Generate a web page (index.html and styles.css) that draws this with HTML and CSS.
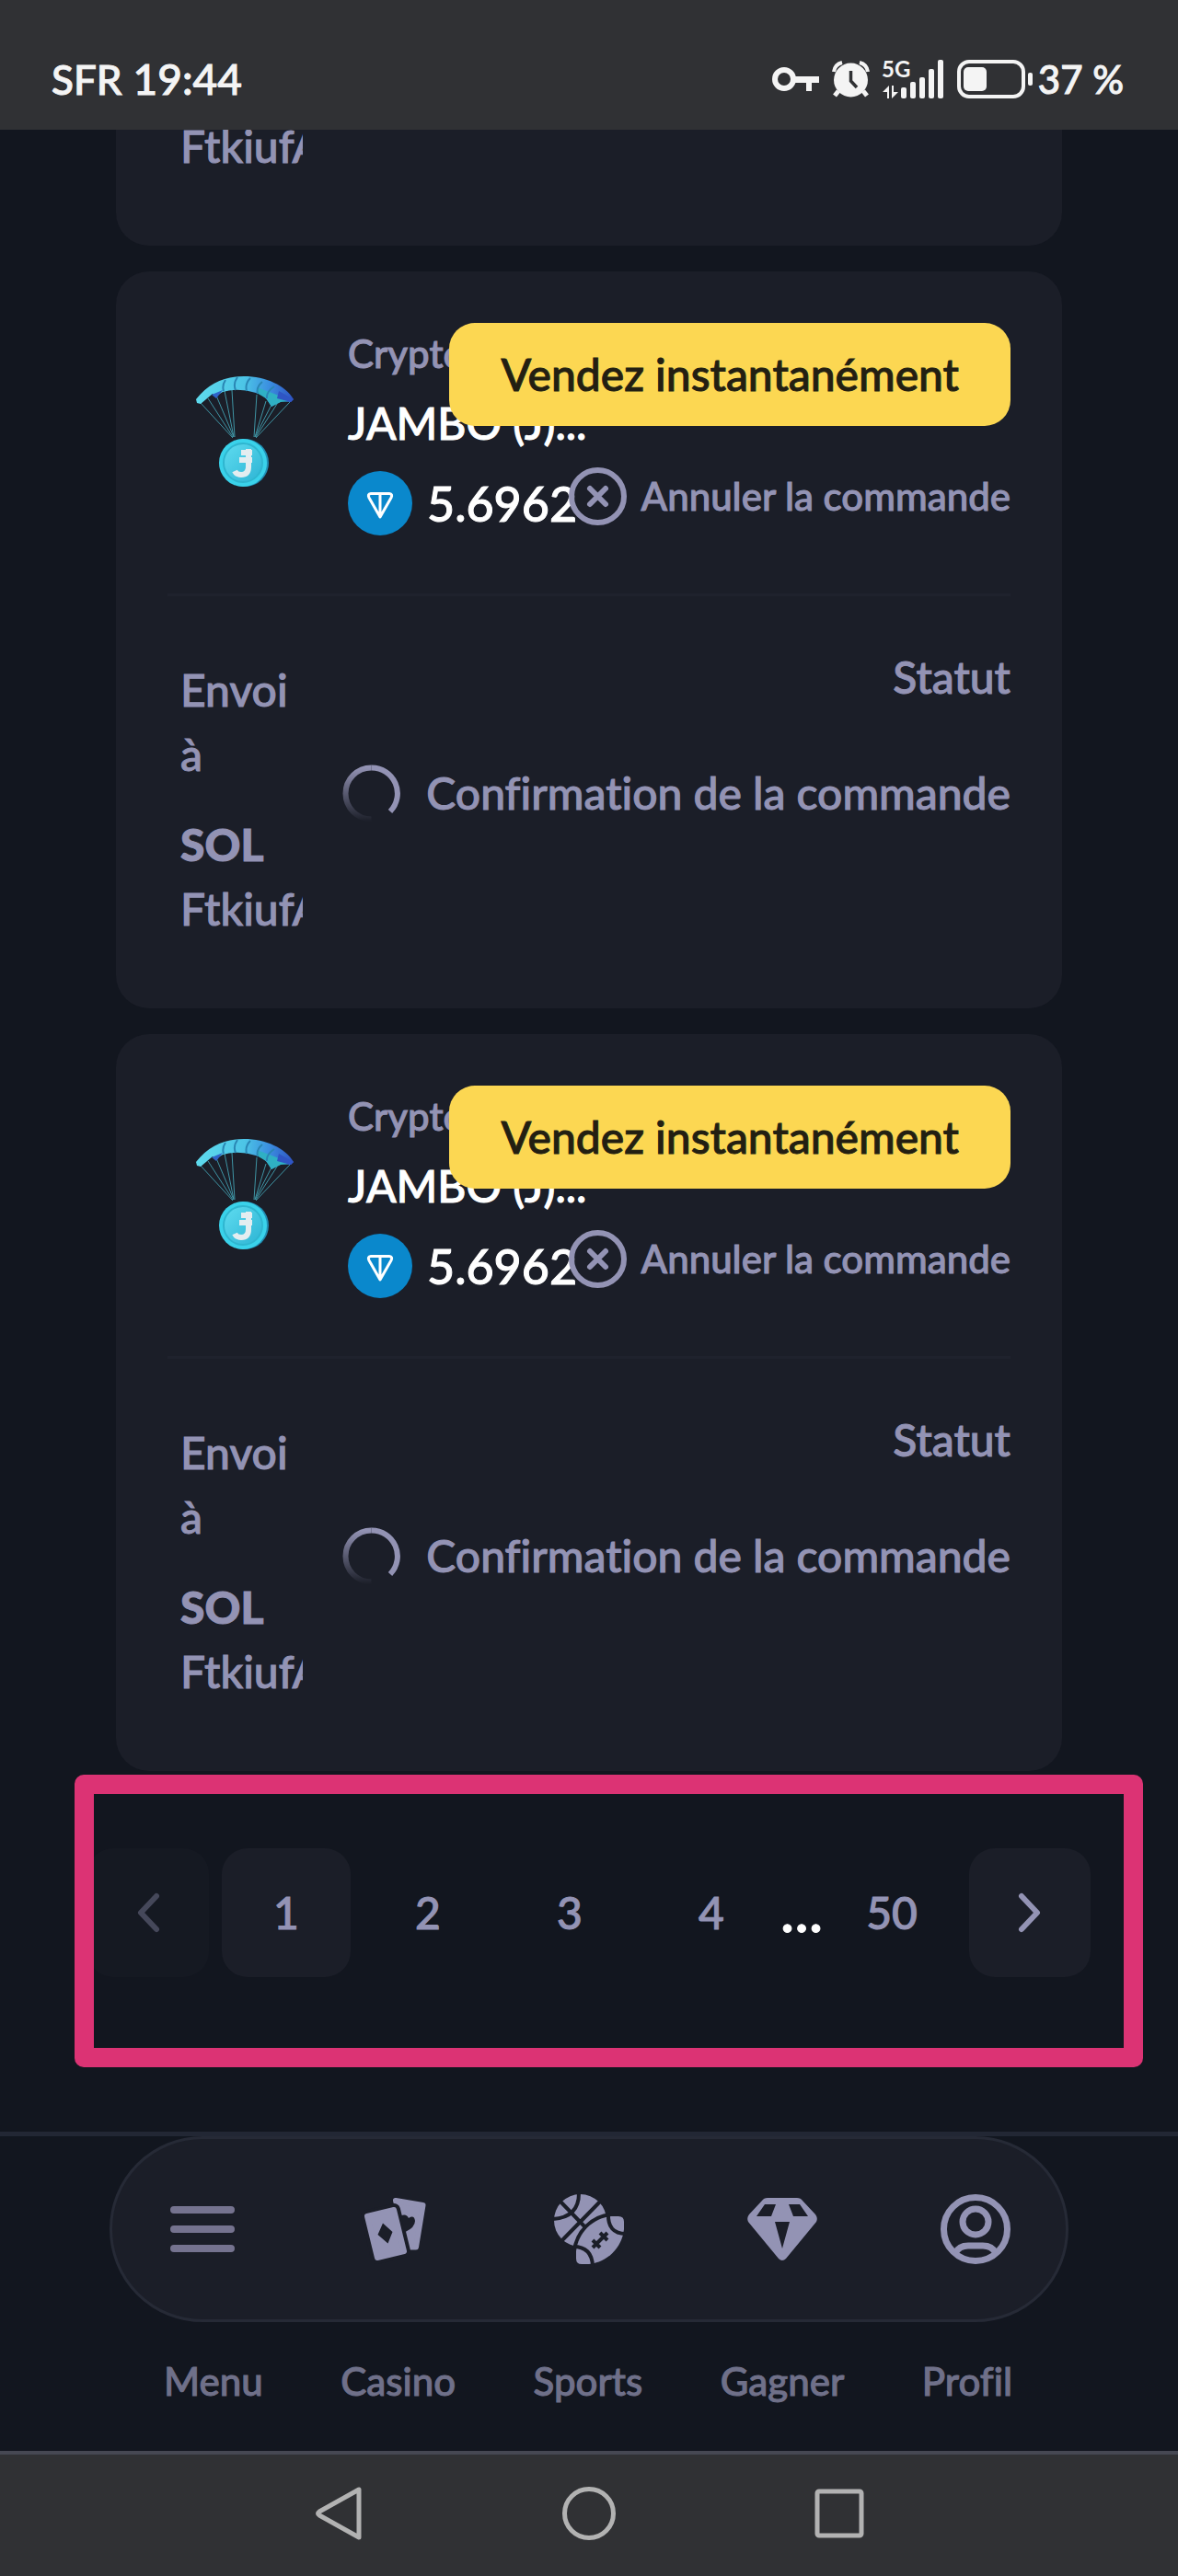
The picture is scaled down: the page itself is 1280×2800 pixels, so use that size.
FILE: index.html
```html
<!DOCTYPE html>
<html lang="fr">
<head>
<meta charset="utf-8">
<meta name="viewport" content="width=device-width, initial-scale=1">
<title>Commandes</title>
<link rel="stylesheet" href="styles.css">
</head>
<body>
<svg class="defs" aria-hidden="true">
  <defs>
    <linearGradient id="fade" gradientUnits="userSpaceOnUse" x1="0" y1="3" x2="0" y2="62">
      <stop offset="0" stop-color="#9393b4"/><stop offset="1" stop-color="#9393b4" stop-opacity="0"/>
    </linearGradient>
    <linearGradient id="canopy" gradientUnits="userSpaceOnUse" x1="0" y1="0" x2="106" y2="10">
      <stop offset="0" stop-color="#5fdcee"/><stop offset=".5" stop-color="#4cc4e6"/><stop offset=".75" stop-color="#3b8fe0"/><stop offset="1" stop-color="#2f55c4"/>
    </linearGradient>
    <linearGradient id="coin" x1="0" y1="0" x2="1" y2="1">
      <stop offset="0" stop-color="#5fdcf0"/><stop offset="1" stop-color="#2db4d4"/>
    </linearGradient>
    <symbol id="airdrop" viewBox="0 0 106 121">
      <g stroke="#3f94a4" stroke-width="1" fill="none">
        <path d="M5 29 40 67M13 24 40 66M22 21 41 66M31 16 41 66M39 15 42 66M66 20 63 66M76 27 64 66M82 31 64 66M88 30 65 66M102 28 65 67"/>
      </g>
      <path d="M0 25C14 7 32 0 52 0C76 0 97 10 106 25L103 28 93 27 82 33C78 25 73 20 65 18Q46 12 29 17L21 22 18 19 5 30 1 29Z" fill="url(#canopy)"/>
      <path d="M66 12 77 16 90 21 103 27 92 28 82 33 76 24 66 18Z" fill="#2fb0c4"/>
      <path d="M90 16 106 25 103 28 88 24Z" fill="#2f55c4"/>
      <path d="M17 20 29 15 22 24Z" fill="#2f63c8"/>
      <path d="M32 4Q28 10 30 16M45 1Q40 8 43 15M59 2Q53 8 55 16M72 6Q65 12 67 19M85 11Q76 17 77 24" fill="none" stroke="#2a86b4" stroke-width="2"/>
      <circle cx="53" cy="94" r="26" fill="#218eb4"/>
      <circle cx="51" cy="94" r="26" fill="#3ad2ea"/>
      <circle cx="51" cy="94" r="21" fill="url(#coin)" stroke="#2fb6d0" stroke-width="2"/>
      <path d="M49 83H61M47 91H61M57 79V98Q57 107 49 107Q44 107 42 103" fill="none" stroke="#e4edf0" stroke-width="6"/>
    </symbol>
    <symbol id="ton" viewBox="0 0 70 70">
      <circle cx="35" cy="35" r="35" fill="#0a88cc"/>
      <path d="M25 24.500H45Q49 25 47 29L35 50 23 29Q21 25 25 24.500ZM35 25V49" fill="none" stroke="#fff" stroke-width="3" stroke-linejoin="round"/>
    </symbol>
    <symbol id="cancel" viewBox="0 0 63 63">
      <g fill="none" stroke="#9393b4" stroke-width="6" stroke-linecap="round">
        <circle cx="31.500" cy="31.500" r="28.500"/><path d="M23 23 40 40M40 23 23 40"/>
      </g>
    </symbol>
    <symbol id="spinner" viewBox="0 0 63 63">
      <path d="M31.500 59.500A28 28 0 0 1 31.500 3.500" fill="none" stroke="url(#fade)" stroke-width="6"/>
      <path d="M31.500 3.500A28 28 0 0 1 52 51" fill="none" stroke="#9393b4" stroke-width="6"/>
    </symbol>
  </defs>
</svg>

<header class="status">
  <span>SFR</span>
  <time class="clock">19:44</time>
  <div class="status-icons">
    <svg class="ic-key" viewBox="0 0 51 26" aria-hidden="true"><circle cx="13" cy="13" r="10" fill="none" stroke="#f4f4f4" stroke-width="6"/><path d="M25 10H51V17H43V26H37V17H25Z" fill="#f4f4f4"/></svg>
    <svg class="ic-alarm" viewBox="0 0 41 40" aria-hidden="true"><circle cx="20.500" cy="21" r="18.500" fill="#f4f4f4"/><path d="M7 33 3 38M34 33 38 38" stroke="#f4f4f4" stroke-width="5"/><path d="M2 12Q3 4 11 2M39 12Q38 4 30 2" fill="none" stroke="#f4f4f4" stroke-width="4"/><path d="M20.500 11V22L27 29" fill="none" stroke="#303134" stroke-width="3.500"/></svg>
    <svg class="ic-signal" viewBox="0 0 67 42" aria-hidden="true"><text x="-1" y="19" class="net">5G</text><g fill="#f4f4f4"><rect x="20" y="30" width="6" height="12" rx="2"/><rect x="30" y="24" width="6" height="18" rx="2"/><rect x="40" y="19" width="6" height="23" rx="2"/><rect x="50" y="10" width="6" height="32" rx="2"/><rect x="60" y="0" width="6" height="42" rx="2"/><path d="M0 35 7 28V42H5V35ZM17 35 10 42V28H12V35Z"/></g></svg>
    <svg class="ic-battery" viewBox="0 0 82 42" aria-hidden="true"><rect x="2" y="2" width="70" height="38" rx="11" fill="none" stroke="#f4f4f4" stroke-width="4"/><rect x="7" y="8" width="25" height="26" rx="5" fill="#f4f4f4"/><rect x="77" y="14" width="5" height="14" rx="2" fill="#f4f4f4"/></svg>
    <span class="level">37 %</span>
  </div>
</header>

<main class="orders">
  <article class="card card-cut">
    <div class="dest"><p class="addr">FtkiufA</p></div>
  </article>

  <article class="card">
    <div class="card-head">
      <div class="art"><svg viewBox="0 0 106 121" role="img" aria-label="JAMBO"><use href="#airdrop"/></svg></div>
      <div class="info">
        <p class="kind">Crypto</p>
        <h2 class="name">JAMBO (J)...</h2>
        <p class="amount"><svg class="ton" aria-hidden="true"><use href="#ton"/></svg>5.6962</p>
      </div>
      <div class="actions">
        <button class="sell" type="button">Vendez instantanément</button>
        <button class="cancel" type="button"><svg class="ring" aria-hidden="true"><use href="#cancel"/></svg>Annuler la commande</button>
      </div>
    </div>
    <div class="card-body">
      <div class="dest"><p>Envoi à</p><p class="coin">SOL</p><p class="addr">FtkiufA</p></div>
      <div class="state"><p>Statut</p><p class="progress"><svg class="ring" aria-hidden="true"><use href="#spinner"/></svg>Confirmation de la commande</p></div>
    </div>
  </article>

  <article class="card">
    <div class="card-head">
      <div class="art"><svg viewBox="0 0 106 121" role="img" aria-label="JAMBO"><use href="#airdrop"/></svg></div>
      <div class="info">
        <p class="kind">Crypto</p>
        <h2 class="name">JAMBO (J)...</h2>
        <p class="amount"><svg class="ton" aria-hidden="true"><use href="#ton"/></svg>5.6962</p>
      </div>
      <div class="actions">
        <button class="sell" type="button">Vendez instantanément</button>
        <button class="cancel" type="button"><svg class="ring" aria-hidden="true"><use href="#cancel"/></svg>Annuler la commande</button>
      </div>
    </div>
    <div class="card-body">
      <div class="dest"><p>Envoi à</p><p class="coin">SOL</p><p class="addr">FtkiufA</p></div>
      <div class="state"><p>Statut</p><p class="progress"><svg class="ring" aria-hidden="true"><use href="#spinner"/></svg>Confirmation de la commande</p></div>
    </div>
  </article>
</main>

<nav class="pager" aria-label="Pagination">
  <button class="arrow" type="button" disabled aria-label="Précédent"><svg viewBox="0 0 24 42"><path d="M21 3 4 21 21 39"/></svg></button>
  <button class="page current" type="button" aria-current="page">1</button>
  <button class="page" type="button">2</button>
  <button class="page" type="button">3</button>
  <button class="page" type="button">4</button>
  <span class="dots">...</span>
  <button class="page" type="button">50</button>
  <button class="arrow" type="button" aria-label="Suivant"><svg viewBox="0 0 24 42"><path d="M3 3 20 21 3 39"/></svg></button>
  <div class="highlight"></div>
</nav>

<nav class="tabs" aria-label="Navigation principale">
  <div class="tab-icons">
    <a href="#menu" aria-label="Menu"><svg viewBox="0 0 76 76"><path d="M7 17H69M7 38H69M7 59H69" stroke="#75738f" stroke-width="8" stroke-linecap="round"/></svg></a>
    <a href="#casino" aria-label="Casino"><svg viewBox="-4 -4 76 76"><g fill="#9393b4" stroke="#9393b4" stroke-width="6" stroke-linejoin="round"><path d="M34 3 63.500 8 56 53.500H48Z"/><path class="cut" d="M3 20 32 13 43 58 14 65Z"/><path d="M3 20 32 13 43 58 14 65Z"/></g><path class="hole" d="M20 27.500 30.500 37 25.500 49.500 14.500 40ZM40 19Q46 17 48 22Q54 18 55 25Q55 32 44.500 37L41 24Z"/></svg></a>
    <a href="#sports" aria-label="Sports"><svg viewBox="0 0 76 76"><circle cx="28.500" cy="28.500" r="28.500" fill="#9393b4"/><g fill="none" stroke="#1b1e28" stroke-width="4"><path d="M7 8 34 36M51 7 8 51M27-1Q27 25-1 27"/></g><path class="ball" d="M30 76Q24 76 24 70V62C26 42 42 26 62 24H70Q76 24 76 30V38C74 58 58 74 38 76Z"/><g fill="none" stroke="#1b1e28" stroke-width="4"><path d="M21 57Q41 57 42 78M59 21Q58 43 78 43M42 58 58 42M42 50 50 58M50 42 58 50"/></g></svg></a>
    <a href="#gagner" aria-label="Gagner"><svg viewBox="0 0 76 76"><path fill="#9393b4" fill-rule="evenodd" d="M22 4H54Q58 4 60 7L74 22Q77 26 75 30L42 70Q38 74 34 70L1 30Q-1 26 2 22L16 7Q18 4 22 4ZM19 11 10 24H26L31 11ZM57 11 66 24H50L45 11ZM30 30 38 59 46 30Z"/></svg></a>
    <a href="#profil" aria-label="Profil"><svg viewBox="0 0 76 76"><g fill="none" stroke="#9393b4" stroke-width="7"><circle cx="38" cy="38" r="34.500"/><circle cx="38" cy="30" r="14"/><path d="M16 64Q20 56 30 56H46Q56 56 60 64"/></g></svg></a>
  </div>
  <div class="tab-labels">
    <a href="#menu">Menu</a><a href="#casino">Casino</a><a href="#sports">Sports</a><a href="#gagner">Gagner</a><a href="#profil">Profil</a>
  </div>
</nav>

<footer class="system">
  <button type="button" aria-label="Retour"><svg viewBox="0 0 58 58"><path d="M51 3V55L8 31Q5 29 8 27Z"/></svg></button>
  <button type="button" aria-label="Accueil"><svg viewBox="0 0 58 58"><circle cx="29" cy="29" r="26.500"/></svg></button>
  <button type="button" aria-label="Applications récentes"><svg viewBox="0 0 58 58"><rect x="5" y="5" width="48" height="48" rx="2"/></svg></button>
</footer>
</body>
</html>
```

FILE: styles.css
```css
* { box-sizing: border-box; }

body {
  margin: 0;
  background: #12161f;
  color: #9393b4;
  font: 500 48px/70px Lato, "Open Sans", sans-serif;
  font-variant-ligatures: none;
  -webkit-text-stroke: 1px;
}

p, h2 { margin: 0; font-size: inherit; font-weight: inherit; }
button { border: 0; padding: 0; background: none; color: inherit; font: inherit; font-variant-ligatures: none; }
a { color: inherit; text-decoration: none; }
svg { display: block; flex: none; overflow: visible; }
.defs { position: absolute; width: 0; height: 0; }

/* Phone status bar */
.status {
  display: flex;
  align-items: center;
  gap: 12px;
  padding: 62px 59px 31px 56px;
  background: #303134;
  color: #f4f4f4;
  font-size: 44px;
  line-height: 48px;
}
.clock { font-size: 46px; }
.status-icons { display: flex; align-items: center; gap: 14px; margin-left: auto; }
.level { margin-left: -8px; font-size: 42px; }
.ic-key { width: 51px; height: 26px; }
.ic-alarm { width: 41px; height: 40px; }
.ic-signal { width: 67px; height: 42px; }
.ic-battery { width: 82px; height: 42px; }
.net { font: 700 24px Lato, sans-serif; fill: #f4f4f4; }

/* Order cards */
.orders { display: flex; flex-direction: column; gap: 28px; padding: 0 126px; overflow: hidden; }
.card { position: relative; padding: 56px 56px 73px; border-radius: 36px; background: #1b1e28; }
.card-cut { padding-top: 0; border-radius: 0 0 36px 36px; overflow: hidden; }
.card-cut .addr { margin-top: -17px; }

.card-head { display: flex; gap: 28px; padding-bottom: 54px; border-bottom: 3px solid #1f222d; }
.art { display: grid; place-items: center; width: 168px; height: 236px; }
.art svg { width: 106px; height: 121px; }
.kind { font-size: 42px; line-height: 66px; }
.name { color: #fff; line-height: 86px; }
.amount { display: flex; align-items: center; gap: 16px; height: 88px; color: #fff; font-size: 52px; }
.ton { width: 70px; height: 70px; }

.actions {
  position: absolute;
  top: 56px;
  right: 56px;
  display: flex;
  flex-direction: column;
  align-items: flex-end;
  gap: 45px;
}
.sell { padding: 21px 56px; border-radius: 28px; background: #fcd752; color: #231f12; }
.cancel { display: flex; align-items: center; gap: 16px; font-size: 42px; line-height: 63px; }
.ring { width: 63px; height: 63px; }

.card-body { display: flex; justify-content: space-between; padding-top: 53px; }
.dest { width: 147px; padding: 14px 0 0 14px; overflow: hidden; }
.card-cut .dest { padding-top: 0; }
.coin { margin-top: 28px; font-weight: 900; }
.state { text-align: right; }
.progress { display: flex; align-items: center; gap: 28px; margin-top: 56px; }

/* Pagination */
.pager {
  position: relative;
  display: flex;
  justify-content: center;
  gap: 14px;
  padding: 84px 0 168px;
}
.page, .arrow { display: grid; place-items: center; width: 140px; height: 140px; border-radius: 28px; }
.arrow { width: 132px; }
.arrow, .current { background: #1b1e28; }
.arrow:disabled { opacity: .4; }
.arrow svg { width: 24px; height: 42px; fill: none; stroke: #9393b4; stroke-width: 6; stroke-linecap: round; stroke-linejoin: round; }
.dots { display: flex; justify-content: center; width: 28px; color: #fff; font-size: 66px; line-height: 132px; }
.highlight {
  position: absolute;
  inset: 4px 38px 70px 81px;
  border: 21px solid #dc3374;
  border-radius: 10px;
  pointer-events: none;
}

/* App tabs */
.tabs { padding-bottom: 48px; border-top: 5px solid #222734; }
.tab-icons {
  display: flex;
  align-items: center;
  justify-content: space-between;
  height: 202px;
  margin: 0 119px;
  padding: 0 60px;
  border: 3px solid #262a36;
  border-radius: 101px;
  background: #1b1e28;
}
.tab-icons svg { width: 76px; height: 76px; }
.hole { fill: #1b1e28; }
.cut { fill: #1b1e28; stroke: #1b1e28; stroke-width: 14; }
.ball { fill: #9393b4; stroke: #1b1e28; stroke-width: 8; paint-order: stroke; }
.tab-labels {
  display: flex;
  justify-content: space-between;
  margin-top: 36px;
  padding: 0 180px 0 178px;
  color: #6f7089;
  font-size: 42px;
  line-height: 56px;
}

/* System navigation */
.system {
  display: flex;
  align-items: center;
  justify-content: center;
  gap: 214px;
  padding: 35px 0 39px;
  border-top: 4px solid #464853;
  background: #303134;
}
.system svg { width: 58px; height: 58px; fill: none; stroke: #b2b2b2; stroke-width: 5; stroke-linejoin: round; }
```
